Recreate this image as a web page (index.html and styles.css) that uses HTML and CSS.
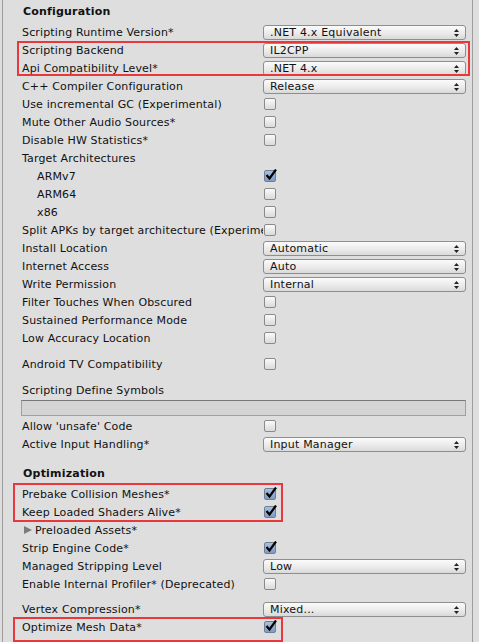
FILE: index.html
```html
<!DOCTYPE html>
<html lang="en">
<head>
    <meta charset="UTF-8">
    <title>Player Settings - Other Settings</title>
    <link rel="stylesheet" href="styles.css">
</head>
<body>
    <div class="inspector">
        <div class="section-title">Configuration</div>
        <div class="row"><span class="label">Scripting Runtime Version*</span><div class="popup">.NET 4.x Equivalent<svg class="arrows" width="5" height="8" viewBox="0 0 5 8"><path d="M2.5 0 L5 3 L0 3 Z M0 5 L5 5 L2.5 8 Z"/></svg></div></div>
        <div class="hl hl-wide">
            <div class="row"><span class="label">Scripting Backend</span><div class="popup">IL2CPP<svg class="arrows" width="5" height="8" viewBox="0 0 5 8"><path d="M2.5 0 L5 3 L0 3 Z M0 5 L5 5 L2.5 8 Z"/></svg></div></div>
            <div class="row"><span class="label">Api Compatibility Level*</span><div class="popup">.NET 4.x<svg class="arrows" width="5" height="8" viewBox="0 0 5 8"><path d="M2.5 0 L5 3 L0 3 Z M0 5 L5 5 L2.5 8 Z"/></svg></div></div>
        </div>
        <div class="row"><span class="label">C++ Compiler Configuration</span><div class="popup">Release<svg class="arrows" width="5" height="8" viewBox="0 0 5 8"><path d="M2.5 0 L5 3 L0 3 Z M0 5 L5 5 L2.5 8 Z"/></svg></div></div>
        <div class="row"><span class="label">Use incremental GC (Experimental)</span><span class="check"></span></div>
        <div class="row"><span class="label">Mute Other Audio Sources*</span><span class="check"></span></div>
        <div class="row"><span class="label">Disable HW Statistics*</span><span class="check"></span></div>
        <div class="row"><span class="label">Target Architectures</span></div>
        <div class="row"><span class="label sub">ARMv7</span><span class="check on"><svg width="14" height="12" viewBox="0 0 14 12"><path d="M2.5 6 L5.5 9.5 L12 0.5"/></svg></span></div>
        <div class="row"><span class="label sub">ARM64</span><span class="check"></span></div>
        <div class="row"><span class="label sub">x86</span><span class="check"></span></div>
        <div class="row"><span class="label">Split APKs by target architecture (Experimental)</span><span class="check"></span></div>
        <div class="row"><span class="label">Install Location</span><div class="popup">Automatic<svg class="arrows" width="5" height="8" viewBox="0 0 5 8"><path d="M2.5 0 L5 3 L0 3 Z M0 5 L5 5 L2.5 8 Z"/></svg></div></div>
        <div class="row"><span class="label">Internet Access</span><div class="popup">Auto<svg class="arrows" width="5" height="8" viewBox="0 0 5 8"><path d="M2.5 0 L5 3 L0 3 Z M0 5 L5 5 L2.5 8 Z"/></svg></div></div>
        <div class="row"><span class="label">Write Permission</span><div class="popup">Internal<svg class="arrows" width="5" height="8" viewBox="0 0 5 8"><path d="M2.5 0 L5 3 L0 3 Z M0 5 L5 5 L2.5 8 Z"/></svg></div></div>
        <div class="row"><span class="label">Filter Touches When Obscured</span><span class="check"></span></div>
        <div class="row"><span class="label">Sustained Performance Mode</span><span class="check"></span></div>
        <div class="row"><span class="label">Low Accuracy Location</span><span class="check"></span></div>
        <div class="row gap"><span class="label">Android TV Compatibility</span><span class="check"></span></div>
        <div class="row gap"><span class="label">Scripting Define Symbols</span></div>
        <div class="textfield"></div>
        <div class="row"><span class="label">Allow 'unsafe' Code</span><span class="check"></span></div>
        <div class="row"><span class="label">Active Input Handling*</span><div class="popup">Input Manager<svg class="arrows" width="5" height="8" viewBox="0 0 5 8"><path d="M2.5 0 L5 3 L0 3 Z M0 5 L5 5 L2.5 8 Z"/></svg></div></div>

        <div class="section-title spaced">Optimization</div>
        <div class="hl hl-short">
            <div class="row"><span class="label">Prebake Collision Meshes*</span><span class="check on"><svg width="14" height="12" viewBox="0 0 14 12"><path d="M2.5 6 L5.5 9.5 L12 0.5"/></svg></span></div>
            <div class="row"><span class="label">Keep Loaded Shaders Alive*</span><span class="check on"><svg width="14" height="12" viewBox="0 0 14 12"><path d="M2.5 6 L5.5 9.5 L12 0.5"/></svg></span></div>
        </div>
        <div class="row"><span class="label foldout"><svg class="tri" width="8" height="8" viewBox="0 0 8 8"><path d="M0 0 L8 4 L0 8 Z"/></svg>Preloaded Assets*</span></div>
        <div class="row"><span class="label">Strip Engine Code*</span><span class="check on"><svg width="14" height="12" viewBox="0 0 14 12"><path d="M2.5 6 L5.5 9.5 L12 0.5"/></svg></span></div>
        <div class="row"><span class="label">Managed Stripping Level</span><div class="popup">Low<svg class="arrows" width="5" height="8" viewBox="0 0 5 8"><path d="M2.5 0 L5 3 L0 3 Z M0 5 L5 5 L2.5 8 Z"/></svg></div></div>
        <div class="row"><span class="label">Enable Internal Profiler* (Deprecated)</span><span class="check"></span></div>
        <div class="row gap-small"><span class="label">Vertex Compression*</span><div class="popup">Mixed...<svg class="arrows" width="5" height="8" viewBox="0 0 5 8"><path d="M2.5 0 L5 3 L0 3 Z M0 5 L5 5 L2.5 8 Z"/></svg></div></div>
        <div class="hl hl-last">
            <div class="row"><span class="label">Optimize Mesh Data*</span><span class="check on"><svg width="14" height="12" viewBox="0 0 14 12"><path d="M2.5 6 L5.5 9.5 L12 0.5"/></svg></span></div>
        </div>
    </div>
</body>
</html>
```

FILE: styles.css
```css
body {
    margin: 0;
    background-color: #dedede;
    font-family: "DejaVu Sans", Verdana, sans-serif;
    font-size: 11px;
    color: #111;
    overflow: hidden;
}
.inspector {
    box-sizing: border-box;
    width: 471px;
    height: 642px;
    margin-left: 2px;
    padding-top: 3px;
    border-left: 1px solid #9c9c9c;
    border-right: 1px solid #9c9c9c;
}
.section-title {
    height: 18px;
    line-height: 18px;
    padding-left: 20px;
    margin-bottom: 2px;
    font-weight: bold;
    letter-spacing: 0.2px;
}
.section-title.spaced {
    margin-top: 12px;
}
.row {
    display: flex;
    align-items: center;
    height: 18px;
}
.row.gap {
    margin-top: 8px;
}
.row.gap-small {
    margin-top: 7px;
}
.label {
    box-sizing: border-box;
    width: 260px;
    padding-left: 19px;
    white-space: nowrap;
    overflow: hidden;
    letter-spacing: 0.15px;
}
.label.sub {
    padding-left: 34px;
}
.label.foldout {
    display: flex;
    align-items: center;
    padding-left: 21px;
}
.tri {
    fill: #7c7c7c;
    margin-right: 3px;
}
.popup {
    position: relative;
    box-sizing: border-box;
    width: 203px;
    height: 15px;
    line-height: 13px;
    padding-left: 6px;
    border: 1px solid #8e8e8e;
    border-radius: 3px;
    background: linear-gradient(#fbfbfb, #e9e9e9 60%, #d9d9d9);
    letter-spacing: 0.2px;
    color: #111;
}
.arrows {
    position: absolute;
    right: 6px;
    top: 3px;
    fill: #222;
}
.check {
    position: relative;
    box-sizing: border-box;
    width: 12px;
    height: 12px;
    margin-left: 1px;
    border: 1px solid #8a8a8a;
    border-radius: 2px;
    background: linear-gradient(#fafafa, #dadada);
}
.check.on {
    background: linear-gradient(#a9bfdc, #7e9cc4);
    border-color: #6e7f95;
}
.check svg {
    position: absolute;
    left: -1px;
    top: -2px;
    fill: none;
    stroke: #000;
    stroke-width: 2.2;
}
.textfield {
    box-sizing: border-box;
    width: 445px;
    height: 16px;
    margin: 1px 0 1px 18px;
    border: 1px solid #a0a0a0;
    border-top-color: #777;
    background: #d4d4d4;
}
.hl {
    position: relative;
}
.hl::after {
    content: "";
    position: absolute;
    border: 2px solid #e8383d;
    pointer-events: none;
}
.hl-wide::after {
    left: 14px;
    width: 449px;
    top: 0;
    bottom: 1px;
}
.hl-short::after {
    left: 10px;
    width: 266px;
    top: -2px;
    bottom: -1px;
}
.hl-last::after {
    left: 10px;
    width: 266px;
    top: -1px;
    bottom: -6px;
}
```
